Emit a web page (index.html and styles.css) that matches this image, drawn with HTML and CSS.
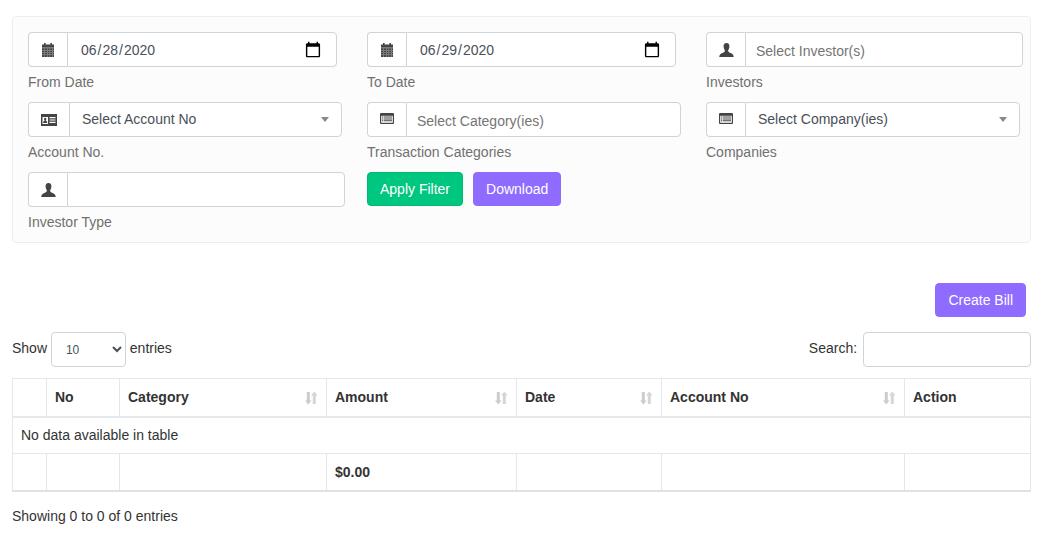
FILE: index.html

```html
<!DOCTYPE html>
<html lang="en">
<head>
  <meta charset="UTF-8" />
  <title>Transactions</title>
  <link rel="stylesheet" href="styles.css">
</head>
<body>
  <svg class="defs" width="0" height="0">
    <symbol id="i-cal" viewBox="0 0 14 14">
      <path d="M3 0h1.600v1.600h4.800V0H11v1.600h2V14H1V1.600h2z"/>
      <path d="M1 4.600h12v.6H1zM1 7.400h12v.5H1zM1 9.400h12v.5H1zM1 11.400h12v.5H1zM3.400 5v9h.5V5zM6 5v9h.5V5zM8.600 5v9h.5V5zM11 5v9h.5V5z" fill="#fff" opacity=".6"/>
    </symbol>
    <symbol id="i-user" viewBox="0 0 15 14">
      <path d="M7.500 0C9.700 0 10.500 1.700 10.400 3.600 10.300 5.400 9.700 6.600 9.200 7.300 9 8.600 9.700 9.200 11 9.800 12.700 10.600 14.500 11 14.700 14H.3C.5 11 2.300 10.600 4 9.800 5.300 9.200 6 8.600 5.800 7.300 5.300 6.600 4.700 5.400 4.600 3.600 4.500 1.700 5.300 0 7.500 0z"/>
    </symbol>
    <symbol id="i-card" viewBox="0 0 16 12">
      <path d="M0 0h16v12H0z"/>
      <path d="M1.500 3h5.500v7H1.500zM8.500 3H14.500v1.200H8.500zM8.500 5.400H14.500v1.200H8.500zM8.500 7.800H14.500V9H8.500z" fill="#fff"/>
      <path d="M4.200 3.800a1.100 1.100 0 0 1 1.100 1.200c0 .7-.3 1.200-.6 1.500 0 .5 1.300.6 1.500 1.400v1.100H2.200V7.900c.2-.8 1.500-.9 1.500-1.400-.3-.3-.6-.8-.6-1.500a1.100 1.100 0 0 1 1.100-1.200z"/>
    </symbol>
    <symbol id="i-list" viewBox="0 0 14 11">
      <path d="M1 0h12a1 1 0 0 1 1 1v9a1 1 0 0 1-1 1H1a1 1 0 0 1-1-1V1a1 1 0 0 1 1-1z"/>
      <path d="M1.200 2.800h11.600v7H1.200z" fill="#fff"/>
      <path d="M2 3.600h1.400v1H2zM4 3.600h8v1H4zM2 5.400h1.400v1H2zM4 5.400h8v1H4zM2 7.200h1.400v1H2zM4 7.200h8v1H4z"/>
    </symbol>
    <symbol id="i-sort" viewBox="0 0 14 14">
      <path d="M2.800 1h3v8.500h1.800L4.300 13.500 1 9.500h1.800z"/>
      <path d="M8.800 13V4.500H7L10.300.5l3.300 4h-1.800V13z" opacity=".8"/>
    </symbol>
  </svg>

  <div class="filters">
    <div class="field">
      <div class="group w-309">
        <span class="addon"><svg class="icon"><use href="#i-cal"/></svg></span>
        <input class="control date" type="date" value="2020-06-28">
      </div>
      <label>From Date</label>
    </div>
    <div class="field">
      <div class="group w-309">
        <span class="addon"><svg class="icon"><use href="#i-cal"/></svg></span>
        <input class="control date" type="date" value="2020-06-29">
      </div>
      <label>To Date</label>
    </div>
    <div class="field">
      <div class="group w-317">
        <span class="addon"><svg class="icon icon-user"><use href="#i-user"/></svg></span>
        <input class="control" type="text" placeholder="Select Investor(s)">
      </div>
      <label>Investors</label>
    </div>

    <div class="field">
      <div class="group w-314">
        <span class="addon wide"><svg class="icon icon-card"><use href="#i-card"/></svg></span>
        <div class="control picker">Select Account No<span class="caret"></span></div>
      </div>
      <label>Account No.</label>
    </div>
    <div class="field">
      <div class="group w-314">
        <span class="addon"><svg class="icon icon-list"><use href="#i-list"/></svg></span>
        <input class="control" type="text" placeholder="Select Category(ies)">
      </div>
      <label>Transaction Categories</label>
    </div>
    <div class="field">
      <div class="group w-314">
        <span class="addon"><svg class="icon icon-list"><use href="#i-list"/></svg></span>
        <div class="control picker">Select Company(ies)<span class="caret"></span></div>
      </div>
      <label>Companies</label>
    </div>

    <div class="field">
      <div class="group w-317">
        <span class="addon"><svg class="icon icon-user"><use href="#i-user"/></svg></span>
        <input class="control" type="text">
      </div>
      <label>Investor Type</label>
    </div>
    <div class="actions">
      <button class="btn green">Apply Filter</button>
      <button class="btn purple">Download</button>
    </div>
  </div>

  <div class="toolbar">
    <button class="btn purple">Create Bill</button>
  </div>

  <div class="table-top">
    <div class="length">
      Show
      <select>
        <option>10</option>
        <option>25</option>
        <option>50</option>
      </select>
      entries
    </div>
    <div class="search">
      Search:
      <input type="search">
    </div>
  </div>

  <table class="data">
    <colgroup>
      <col class="c1"><col class="c2"><col class="c3"><col class="c4"><col class="c5"><col class="c6"><col class="c7">
    </colgroup>
    <thead>
      <tr>
        <th></th>
        <th>No</th>
        <th class="sorting">Category<svg class="sort"><use href="#i-sort"/></svg></th>
        <th class="sorting">Amount<svg class="sort"><use href="#i-sort"/></svg></th>
        <th class="sorting">Date<svg class="sort"><use href="#i-sort"/></svg></th>
        <th class="sorting">Account No<svg class="sort"><use href="#i-sort"/></svg></th>
        <th>Action</th>
      </tr>
    </thead>
    <tbody>
      <tr><td colspan="7">No data available in table</td></tr>
    </tbody>
    <tfoot>
      <tr>
        <td></td><td></td><td></td>
        <td class="total">$0.00</td>
        <td></td><td></td><td></td>
      </tr>
    </tfoot>
  </table>

  <div class="info">Showing 0 to 0 of 0 entries</div>
</body>
</html>
```

FILE: styles.css

```css
body {
  font-family: "Liberation Sans", Arial, sans-serif;
  font-size: 14px;
  color: #333;
  background: #fff;
  margin: 0;
  padding: 16px 16px 0 12px;
}
.defs {
  position: absolute;
}
.filters {
  background: #fcfcfc;
  border: 1px solid #eee;
  border-radius: 4px;
  padding: 15px 7px 3px 15px;
  display: grid;
  grid-template-columns: 339px 339px 1fr;
  row-gap: 3px;
}
.field label {
  display: block;
  color: #707070;
  line-height: 16px;
  margin-top: 7px;
  margin-bottom: 9px;
}
.group {
  display: flex;
  height: 35px;
}
.w-309 { width: 309px; }
.w-314 { width: 314px; }
.w-317 { width: 317px; }
.addon {
  flex: none;
  width: 39px;
  box-sizing: border-box;
  display: flex;
  align-items: center;
  justify-content: center;
  background: #fff;
  border: 1px solid #ced4da;
  border-right: 0;
  border-radius: 4px 0 0 4px;
}
.addon.wide {
  width: 41px;
}
.icon {
  width: 14px;
  height: 14px;
  fill: #444;
}
.icon-user {
  width: 15px;
}
.icon-card {
  width: 16px;
  height: 12px;
}
.icon-list {
  height: 11px;
  margin-bottom: 3px;
}
.control {
  flex: 1;
  min-width: 0;
  box-sizing: border-box;
  height: 35px;
  padding: 2px 10px 0;
  font-family: inherit;
  font-size: 14px;
  color: #495057;
  background: #fff;
  border: 1px solid #ced4da;
  border-radius: 0 4px 4px 0;
  outline: none;
}
.control::placeholder {
  color: #757575;
  opacity: 1;
}
.date {
  padding: 0 14px 0 12px;
}
.date::-webkit-calendar-picker-indicator {
  width: 18px;
  height: 18px;
  padding: 0;
  margin: 0;
}
.picker {
  display: flex;
  align-items: center;
  justify-content: space-between;
  padding: 0 12px;
  line-height: 33px;
}
.caret {
  width: 0;
  height: 0;
  border-left: 4px solid transparent;
  border-right: 4px solid transparent;
  border-top: 5px solid #888;
}
.actions {
  display: flex;
  gap: 10px;
  align-items: flex-start;
}
.btn {
  font-family: inherit;
  font-size: 14px;
  line-height: 20px;
  color: #fff;
  padding: 6px 12px;
  height: 34px;
  border: 1px solid transparent;
  border-radius: 4px;
  cursor: pointer;
}
.green {
  background: #00c77f;
  border-color: #00b974;
}
.purple {
  background: #8f6bff;
  border-color: #8f6bff;
}
.toolbar {
  display: flex;
  justify-content: flex-end;
  margin-top: 40px;
  padding-right: 5px;
}
.table-top {
  display: flex;
  justify-content: space-between;
  align-items: center;
  margin-top: 15px;
  height: 35px;
}
.length select {
  width: 75px;
  height: 35px;
  padding: 0 10px;
  margin: 0;
  font-family: inherit;
  font-size: 12px;
  color: #495057;
  background: #fff;
  border: 1px solid #ced4da;
  border-radius: 4px;
  vertical-align: middle;
}
.search input {
  width: 168px;
  height: 35px;
  box-sizing: border-box;
  margin-left: 2px;
  border: 1px solid #ced4da;
  border-radius: 4px;
  background: #fff;
  outline: none;
  vertical-align: middle;
}
.data {
  width: 1018px;
  margin-top: 11px;
  table-layout: fixed;
  border-collapse: collapse;
  border: 1px solid #dee2e6;
}
.c1 { width: 34px; }
.c2 { width: 73px; }
.c3 { width: 207px; }
.c4 { width: 190px; }
.c5 { width: 145px; }
.c6 { width: 243px; }
.c7 { width: 126px; }
.data th, .data td {
  border: 1px solid #e5e7ea;
  padding: 0 8px;
  text-align: left;
  height: 37px;
  box-sizing: border-box;
}
.data th {
  height: 38px;
  border-bottom: 2px solid #e5e7ea;
  font-weight: bold;
}
.data tfoot td {
  height: 37px;
  border-bottom: 2px solid #dee2e6;
}
.sorting {
  position: relative;
}
.sort {
  position: absolute;
  right: 8px;
  top: 12px;
  width: 14px;
  height: 14px;
  fill: #ccc;
}
.total {
  font-weight: bold;
}
.info {
  margin-top: 16px;
  line-height: 16px;
}
```
